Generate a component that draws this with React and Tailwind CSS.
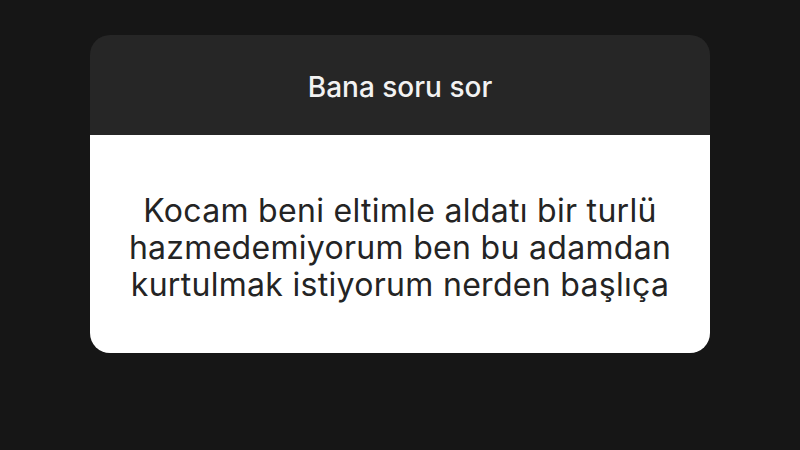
export default function App() {
  return (
    <div className="w-[800px] h-[450px] bg-[#161616] pt-[35px] pl-[90px]" style={{ fontFamily: 'Inter, "Liberation Sans", Arial, sans-serif' }}>
      <div className="w-[620px] rounded-[20px] overflow-hidden">
        <div className="h-[100px] bg-[#262626] flex items-center justify-center pt-[3px]">
          <span className="text-[28px] font-medium text-[#f2f2f2]">Bana soru sor</span>
        </div>
        <div className="h-[218px] bg-white flex items-center justify-center pt-[6px]">
          <p className="text-[32px] leading-[37px] tracking-[0.3px] text-[#242424] text-center">
            Kocam beni eltimle aldatı bir turlü<br />
            hazmedemiyorum ben bu adamdan<br />
            kurtulmak istiyorum nerden başlıça
          </p>
        </div>
      </div>
    </div>
  )
}
